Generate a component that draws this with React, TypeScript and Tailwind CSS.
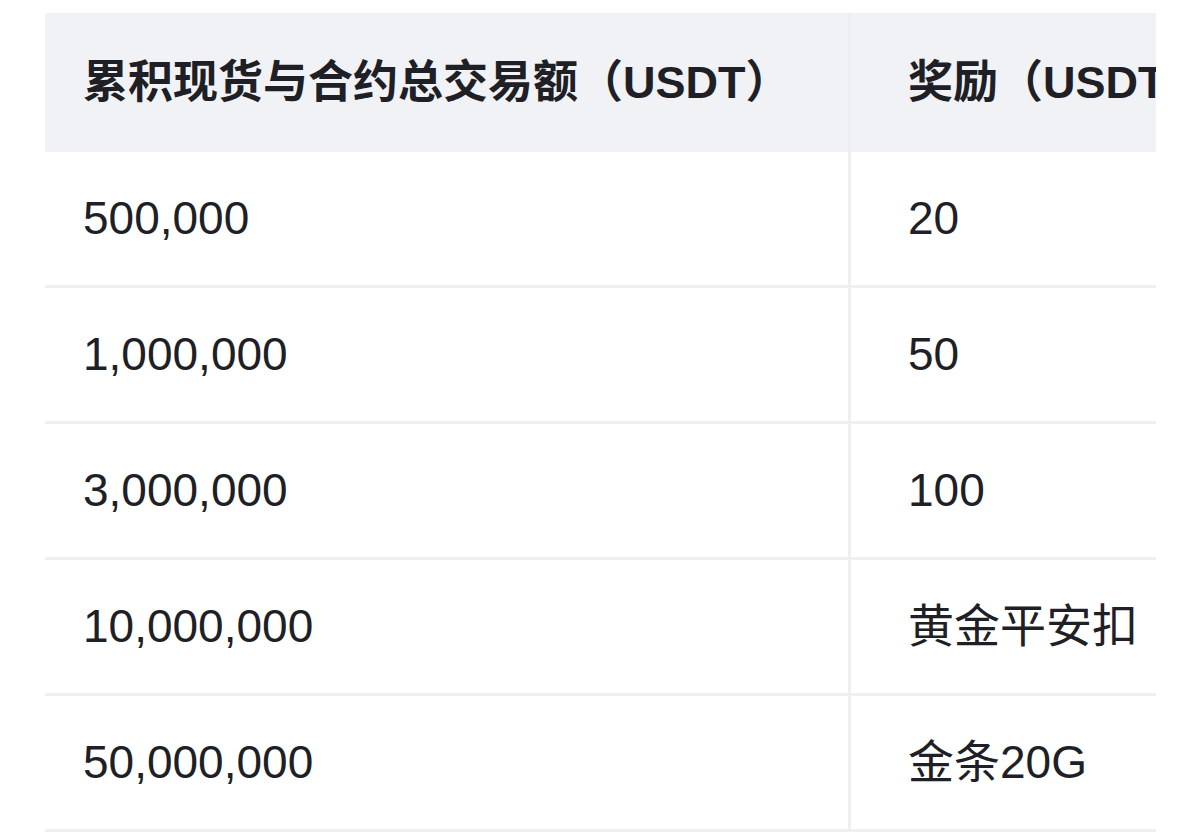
const rows = [
  { amount: "500,000", reward: "20" },
  { amount: "1,000,000", reward: "50" },
  { amount: "3,000,000", reward: "100" },
  { amount: "10,000,000", reward: "黄金平安扣" },
  { amount: "50,000,000", reward: "金条20G" },
];

const font = "font-['Liberation_Sans','Noto_Sans_CJK_SC',sans-serif]";

export default function App() {
  return (
    <div className={`min-h-[840px] w-[1200px] bg-white pt-[13px] pl-[45px] ${font} text-[#1e2026]`}>
      <div className="w-[1111px] overflow-hidden">
        <div className="flex h-[139px] bg-[#f1f2f5] text-[45px] font-bold whitespace-nowrap">
          <div className="flex w-[806px] shrink-0 items-center border-r-[3px] border-[#eceef2] pl-[38px]">
            累积现货与合约总交易额（USDT）
          </div>
          <div className="flex flex-1 items-center overflow-hidden pl-[57px]">
            奖励（USDT）
          </div>
        </div>

        {rows.map((row) => (
          <div
            key={row.amount}
            className="flex h-[136px] border-b-[3px] border-[#eeeff1] text-[46px] whitespace-nowrap"
          >
            <div className="flex w-[806px] shrink-0 items-center border-r-[3px] border-[#eeeff1] pl-[38px]">
              {row.amount}
            </div>
            <div className="flex flex-1 items-center pl-[57px]">{row.reward}</div>
          </div>
        ))}
      </div>
    </div>
  );
}
